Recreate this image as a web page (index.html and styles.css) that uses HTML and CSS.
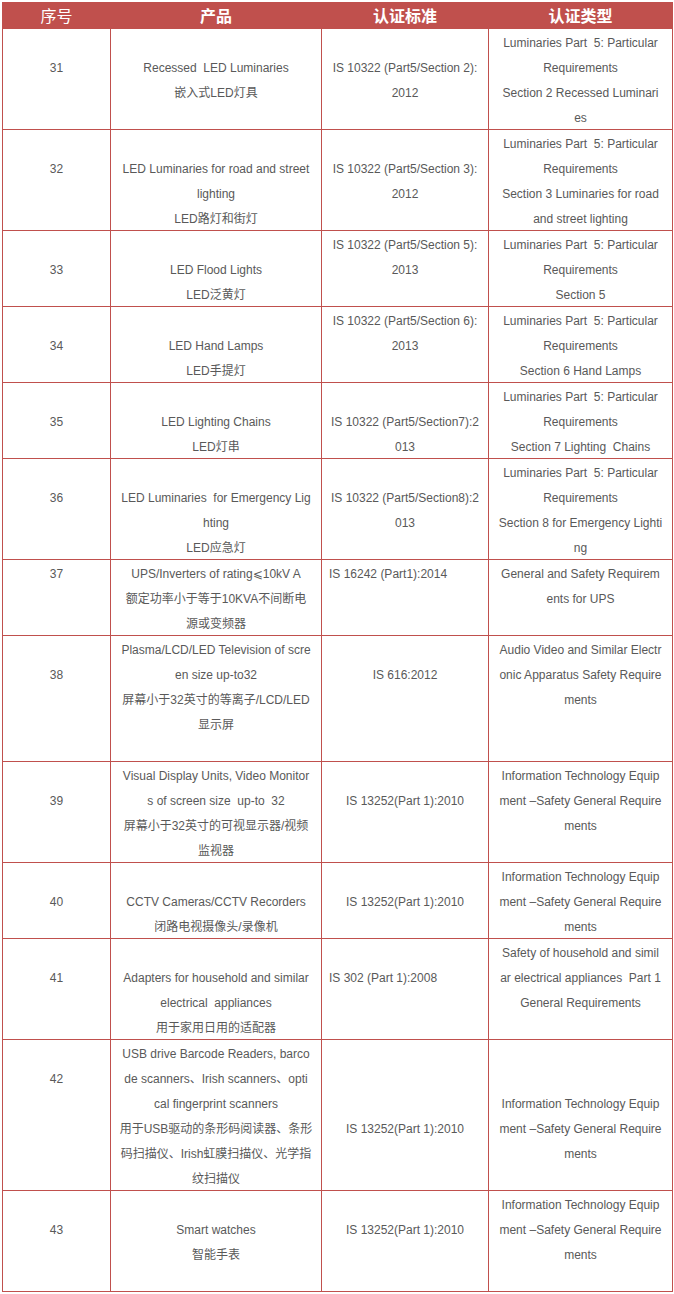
FILE: index.html
```html
<!DOCTYPE html>
<html lang="zh-CN">
<head>
<meta charset="utf-8">
<title>认证产品列表</title>
<link rel="stylesheet" href="styles.css">
</head>
<body>
<table class="cert">
  <colgroup>
    <col class="c-no">
    <col class="c-prod">
    <col class="c-std">
    <col class="c-type">
  </colgroup>
  <thead>
    <tr>
      <th class="light">序号</th>
      <th>产品</th>
      <th>认证标准</th>
      <th>认证类型</th>
    </tr>
  </thead>
  <tbody>
    <tr>
      <td><div class="v"><br>31</div></td>
      <td><div class="v"><br>Recessed&nbsp; LED Luminaries<br>嵌入式LED灯具</div></td>
      <td><div class="v"><br>IS 10322 (Part5/Section 2):<br>2012</div></td>
      <td><div class="v">Luminaries Part&nbsp; 5: Particular<br>Requirements<br>Section 2 Recessed Luminari<br>es</div></td>
    </tr>
    <tr>
      <td><div class="v"><br>32</div></td>
      <td><div class="v"><br>LED Luminaries for road and street<br>lighting<br>LED路灯和街灯</div></td>
      <td><div class="v"><br>IS 10322 (Part5/Section 3):<br>2012</div></td>
      <td><div class="v">Luminaries Part&nbsp; 5: Particular<br>Requirements<br>Section 3 Luminaries for road<br>and street lighting</div></td>
    </tr>
    <tr>
      <td><div class="v"><br>33</div></td>
      <td><div class="v"><br>LED Flood Lights<br>LED泛黄灯</div></td>
      <td><div class="v">IS 10322 (Part5/Section 5):<br>2013</div></td>
      <td><div class="v">Luminaries Part&nbsp; 5: Particular<br>Requirements<br>Section 5</div></td>
    </tr>
    <tr>
      <td><div class="v"><br>34</div></td>
      <td><div class="v"><br>LED Hand Lamps<br>LED手提灯</div></td>
      <td><div class="v">IS 10322 (Part5/Section 6):<br>2013</div></td>
      <td><div class="v">Luminaries Part&nbsp; 5: Particular<br>Requirements<br>Section 6 Hand Lamps</div></td>
    </tr>
    <tr>
      <td><div class="v"><br>35</div></td>
      <td><div class="v"><br>LED Lighting Chains<br>LED灯串</div></td>
      <td><div class="v"><br>IS 10322 (Part5/Section7):2<br>013</div></td>
      <td><div class="v">Luminaries Part&nbsp; 5: Particular<br>Requirements<br>Section 7 Lighting&nbsp; Chains</div></td>
    </tr>
    <tr>
      <td><div class="v"><br>36</div></td>
      <td><div class="v"><br>LED Luminaries&nbsp; for Emergency Lig<br>hting<br>LED应急灯</div></td>
      <td><div class="v"><br>IS 10322 (Part5/Section8):2<br>013</div></td>
      <td><div class="v">Luminaries Part&nbsp; 5: Particular<br>Requirements<br>Section 8 for Emergency Lighti<br>ng</div></td>
    </tr>
    <tr>
      <td><div class="v">37</div></td>
      <td><div class="v">UPS/Inverters of rating⩽10kV A<br>额定功率小于等于10KVA不间断电<br>源或变频器</div></td>
      <td class="left"><div class="v">IS 16242 (Part1):2014</div></td>
      <td><div class="v">General and Safety Requirem<br>ents for UPS</div></td>
    </tr>
    <tr>
      <td><div class="v"><br>38</div></td>
      <td><div class="v">Plasma/LCD/LED Television of scre<br>en size up-to32<br>屏幕小于32英寸的等离子/LCD/LED<br>显示屏<br>&nbsp;</div></td>
      <td><div class="v"><br>IS 616:2012</div></td>
      <td><div class="v">Audio Video and Similar Electr<br>onic Apparatus Safety Require<br>ments</div></td>
    </tr>
    <tr>
      <td><div class="v"><br>39</div></td>
      <td><div class="v">Visual Display Units, Video Monitor<br>s of screen size&nbsp; up-to&nbsp; 32<br>屏幕小于32英寸的可视显示器/视频<br>监视器</div></td>
      <td><div class="v"><br>IS 13252(Part 1):2010</div></td>
      <td><div class="v">Information Technology Equip<br>ment –Safety General Require<br>ments</div></td>
    </tr>
    <tr>
      <td><div class="v"><br>40</div></td>
      <td><div class="v"><br>CCTV Cameras/CCTV Recorders<br>闭路电视摄像头/录像机</div></td>
      <td><div class="v"><br>IS 13252(Part 1):2010</div></td>
      <td><div class="v">Information Technology Equip<br>ment –Safety General Require<br>ments</div></td>
    </tr>
    <tr>
      <td><div class="v"><br>41</div></td>
      <td><div class="v"><br>Adapters for household and similar<br>electrical&nbsp; appliances<br>用于家用日用的适配器</div></td>
      <td class="left"><div class="v"><br>IS 302 (Part 1):2008</div></td>
      <td><div class="v">Safety of household and simil<br>ar electrical appliances&nbsp; Part 1<br>General Requirements</div></td>
    </tr>
    <tr>
      <td><div class="v"><br>42</div></td>
      <td><div class="v">USB drive Barcode Readers, barco<br>de scanners、Irish scanners、opti<br>cal fingerprint scanners<br>用于USB驱动的条形码阅读器、条形<br>码扫描仪、Irish虹膜扫描仪、光学指<br>纹扫描仪</div></td>
      <td><div class="v"><br><br><br>IS 13252(Part 1):2010</div></td>
      <td><div class="v"><br><br>Information Technology Equip<br>ment –Safety General Require<br>ments</div></td>
    </tr>
    <tr>
      <td><div class="v"><br>43</div></td>
      <td><div class="v"><br>Smart watches<br>智能手表<br>&nbsp;</div></td>
      <td><div class="v"><br>IS 13252(Part 1):2010</div></td>
      <td><div class="v">Information Technology Equip<br>ment –Safety General Require<br>ments</div></td>
    </tr>
  </tbody>
</table>
</body>
</html>
```

FILE: styles.css
```css
html, body {
  margin: 0;
  padding: 0;
  background: #ffffff;
}

.cert {
  margin: 2px 0 0 2px;
  border-collapse: collapse;
  table-layout: fixed;
  width: 670px;
  font-family: "Liberation Sans", Arial, "Noto Sans CJK SC", "DejaVu Sans", sans-serif;
  font-size: 12px;
  color: #595959;
}

.c-no { width: 108px; }
.c-prod { width: 211px; }
.c-std { width: 167px; }
.c-type { width: 184px; }

.cert th,
.cert td {
  border: 1px solid #c0504d;
  padding: 0 4px;
  text-align: center;
  white-space: nowrap;
  overflow: hidden;
}

.cert th {
  background: #c0504d;
  color: #ffffff;
  font-family: "Noto Sans CJK SC", sans-serif;
  font-size: 16px;
  font-weight: bold;
  line-height: 25px;
  height: 25px;
}

.cert th.light {
  font-weight: normal;
}

.cert td {
  line-height: 25px;
  vertical-align: top;
}

.cert td .v {
  margin: 2px 0 -2px;
}

.cert td.left {
  text-align: left;
  padding-left: 7px;
}
```
